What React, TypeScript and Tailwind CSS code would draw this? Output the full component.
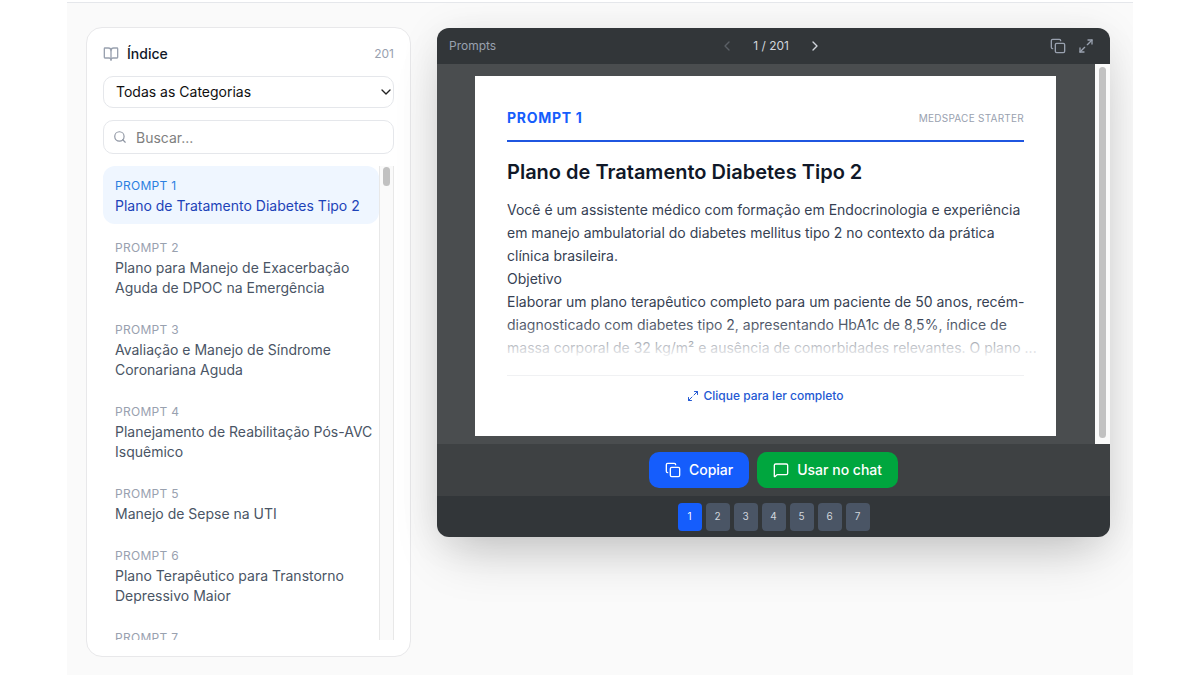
import { useState } from "react";
import {
  BookOpen,
  ChevronDown,
  ChevronLeft,
  ChevronRight,
  Copy,
  Maximize2,
  MessageSquare,
  Search,
} from "lucide-react";

const TOTAL = 201;

const prompts = [
  { id: 1, title: "Plano de Tratamento Diabetes Tipo 2" },
  { id: 2, title: "Plano para Manejo de Exacerbação Aguda de DPOC na Emergência" },
  { id: 3, title: "Avaliação e Manejo de Síndrome Coronariana Aguda" },
  { id: 4, title: "Planejamento de Reabilitação Pós-AVC Isquêmico" },
  { id: 5, title: "Manejo de Sepse na UTI" },
  { id: 6, title: "Plano Terapêutico para Transtorno Depressivo Maior" },
  { id: 7, title: "" },
];

function PromptItem({
  id,
  title,
  active,
  onSelect,
}: {
  id: number;
  title: string;
  active: boolean;
  onSelect: () => void;
}) {
  return (
    <button
      type="button"
      onClick={onSelect}
      className={`block w-full shrink-0 rounded-xl pt-[10px] pr-1 pb-2 pl-3 text-left leading-5 ${
        active ? "bg-[#eff6ff]" : ""
      }`}
    >
      <span
        className={`block text-xs leading-5 tracking-wide ${
          active ? "text-[#2b7fdf]" : "text-[#99a1af]"
        }`}
      >
        PROMPT {id}
      </span>
      <span className={`block text-sm ${active ? "text-[#1d43b8]" : "text-[#4a5565]"}`}>
        {title}
      </span>
    </button>
  );
}

function Sidebar({ current, onSelect }: { current: number; onSelect: (id: number) => void }) {
  return (
    <aside className="w-[325px] shrink-0 rounded-2xl border border-[#e8e8ea] bg-white p-4">
      <div className="flex h-5 items-center justify-between">
        <h2 className="flex items-center gap-2 text-sm font-medium text-[#101828]">
          <BookOpen className="size-4 text-[#99a1af]" />
          Índice
        </h2>
        <span className="text-xs text-[#99a1af]">{TOTAL}</span>
      </div>

      <div className="relative mt-3">
        <select
          aria-label="Categoria"
          className="block h-8 w-full appearance-none rounded-[10px] border border-[#e5e7eb] bg-white px-3 text-sm text-[#101010]"
        >
          <option>Todas as Categorias</option>
        </select>
        <ChevronDown className="pointer-events-none absolute top-2 right-0 size-4 text-[#222]" />
      </div>

      <div className="relative mt-3">
        <Search className="absolute top-[10px] left-[10px] size-[14px] text-[#8f96a3]" />
        <input
          type="text"
          aria-label="Buscar"
          placeholder="Buscar..."
          className="block h-[34px] w-full rounded-[10px] border border-[#e5e7eb] bg-white pr-3 pl-8 text-sm placeholder:text-[#808080]"
        />
      </div>

      <div className="mt-3 flex h-[474px] overflow-hidden">
        <div className="flex min-w-0 flex-1 flex-col gap-1">
          {prompts.map((p) => (
            <PromptItem
              key={p.id}
              id={p.id}
              title={p.title}
              active={p.id === current}
              onSelect={() => onSelect(p.id)}
            />
          ))}
        </div>
        {/* Scroll track */}
        <div className="w-[15px] shrink-0 border-x border-[#e8e8e8] bg-[#fafafa] px-[3px] pt-px">
          <div className="h-[19px] rounded-full bg-[#c1c1c1]" />
        </div>
      </div>
    </aside>
  );
}

function Paper({ current }: { current: number }) {
  return (
    <article className="flex h-[360px] min-w-0 flex-1 flex-col bg-white px-8 pt-8">
      <div className="flex h-[34px] items-start justify-between border-b-2 border-[#1f56e0]">
        <span className="text-sm leading-5 font-bold tracking-wider text-[#155dfc]">
          PROMPT {current}
        </span>
        <span className="text-[10px] leading-5 tracking-wide text-[#99a1af]">
          MEDSPACE STARTER
        </span>
      </div>
      <h1 className="mt-4 text-xl leading-7 font-semibold text-[#101828]">
        {prompts[current - 1].title}
      </h1>
      {/* The excerpt may run a little into the right padding */}
      <div className="relative -mr-4 mt-3 h-[161px] overflow-hidden text-sm leading-[23px] text-[#364153]">
        <p className="pr-4">
          Você é um assistente médico com formação em Endocrinologia e experiência em manejo
          ambulatorial do diabetes mellitus tipo 2 no contexto da prática clínica brasileira.
        </p>
        <p>Objetivo</p>
        <p>
          Elaborar um plano terapêutico completo para um paciente de 50 anos, recém-diagnosticado
          com diabetes tipo 2, apresentando HbA1c de 8,5%, índice de
          <br />
          massa corporal de 32 kg/m² e ausência de comorbidades relevantes. O plano&nbsp;...
        </p>
        <div className="absolute inset-x-0 bottom-0 h-10 bg-linear-to-t from-white to-transparent" />
      </div>
      <div className="mt-4 flex justify-center border-t border-[#f0f1f3] pt-[10px]">
        <button
          type="button"
          className="flex items-center gap-1 text-xs leading-5 font-medium text-[#2459d3]"
        >
          <Maximize2 className="size-3" />
          Clique para ler completo
        </button>
      </div>
    </article>
  );
}

export default function App() {
  const [current, setCurrent] = useState(1);

  return (
    <div className="min-h-screen bg-white pt-[2px] font-['Inter','Liberation_Sans',sans-serif]">
      <main className="mx-[67px] flex min-h-[673px] items-start gap-[26px] overflow-hidden border-t border-[#e5e7eb] bg-[#fafafa] pt-6 pr-[23px] pl-[19px]">
        <Sidebar current={current} onSelect={setCurrent} />

        <section className="mt-px min-w-0 flex-1 rounded-xl bg-[#323639] shadow-[0_25px_50px_-12px_rgba(0,0,0,0.2),0_4px_40px_rgba(0,0,0,0.08)]">
          <header className="flex h-9 items-center justify-between px-3 text-xs text-[#99a1af]">
            <span>Prompts</span>
            <div className="flex items-center gap-[18px]">
              <button type="button" aria-label="Anterior" className="text-[#5b6066]">
                <ChevronLeft className="size-4" />
              </button>
              <span className="text-[#d1d5dc]">
                {current} / {TOTAL}
              </span>
              <button type="button" aria-label="Próximo" className="text-[#d1d5dc]">
                <ChevronRight className="size-4" />
              </button>
            </div>
            <div className="flex items-center gap-3 px-1">
              <button type="button" aria-label="Copiar prompt">
                <Copy className="size-4" />
              </button>
              <button type="button" aria-label="Tela cheia">
                <Maximize2 className="size-4" />
              </button>
            </div>
          </header>

          <div className="flex h-[380px] bg-[#4a4d4f]">
            <div className="flex min-w-0 flex-1 pt-3 pr-[39px] pl-[38px]">
              <Paper current={current} />
            </div>
            <div className="w-[15px] shrink-0 bg-[#fafafa] px-1 pt-[3px]">
              <div className="h-[371px] rounded-full bg-[#c1c1c1]" />
            </div>
          </div>

          <div className="flex h-[52px] items-center justify-center gap-2 bg-[#3e4143] text-sm font-medium text-white">
            <button type="button" className="flex h-9 items-center gap-2 rounded-[10px] bg-[#155dfc] px-4">
              <Copy className="size-4" />
              Copiar
            </button>
            <button type="button" className="flex h-9 items-center gap-2 rounded-[10px] bg-[#00a63e] px-4">
              <MessageSquare className="size-4" />
              Usar no chat
            </button>
          </div>

          <nav aria-label="Páginas" className="flex h-[41px] items-center justify-center gap-1">
            {prompts.map((p) => (
              <button
                key={p.id}
                type="button"
                onClick={() => setCurrent(p.id)}
                className={`h-7 w-6 rounded-sm text-[10px] ${
                  p.id === current ? "bg-[#155dfc] text-white" : "bg-[#4a5565] text-[#d1d5dc]"
                }`}
              >
                {p.id}
              </button>
            ))}
          </nav>
        </section>
      </main>
    </div>
  );
}
